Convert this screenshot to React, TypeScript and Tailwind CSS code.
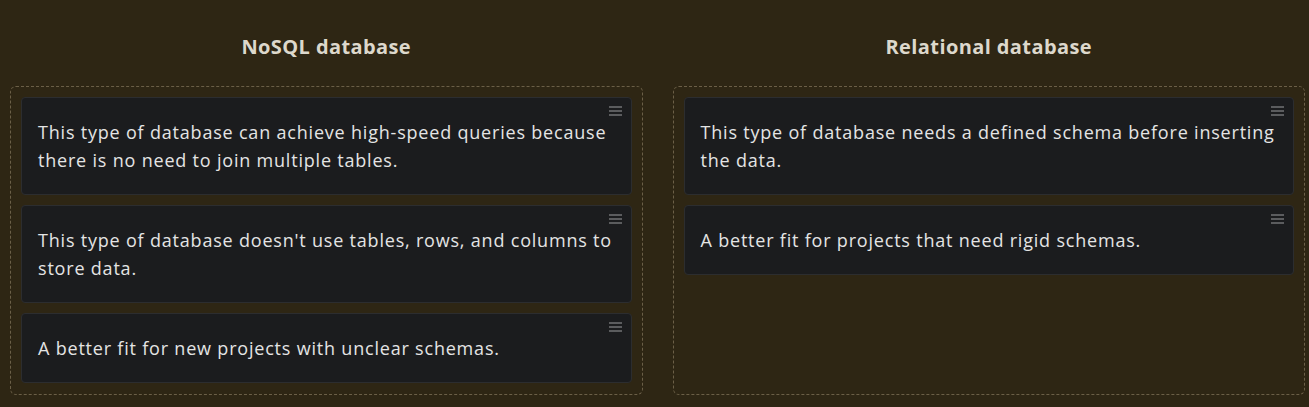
import React from 'react';

const columns = [
  {
    title: 'NoSQL database',
    items: [
      'This type of database can achieve high-speed queries because there is no need to join multiple tables.',
      "This type of database doesn't use tables, rows, and columns to store data.",
      'A better fit for new projects with unclear schemas.',
    ],
  },
  {
    title: 'Relational database',
    items: [
      'This type of database needs a defined schema before inserting the data.',
      'A better fit for projects that need rigid schemas.',
    ],
  },
];

function DragHandle() {
  return (
    <svg width="13" height="11" viewBox="0 0 13 11" className="absolute top-[8px] right-[9px]">
      <rect x="0" y="0" width="13" height="2" fill="#5b5c5e" />
      <rect x="0" y="4" width="13" height="2" fill="#5b5c5e" />
      <rect x="0" y="8" width="13" height="2" fill="#5b5c5e" />
    </svg>
  );
}

export default function App() {
  return (
    <div
      className="min-h-[407px] w-full bg-[#2e2614] pl-[10px] pr-[4px] pt-[31px]"
      style={{ fontFamily: '"Open Sans", sans-serif' }}
    >
      <div className="grid grid-cols-2 gap-[30px]">
        {columns.map((col) => (
          <div key={col.title} className="flex flex-col">
            <h2 className="text-center text-[20px] font-bold leading-[32px] tracking-[0.4px] text-[#ddd8cc]">
              {col.title}
            </h2>
            <div className="mt-[23px] flex h-[309px] flex-col gap-[10px] rounded-[6px] border border-dashed border-[#6b5f47] p-[10px]">
              {col.items.map((item) => (
                <div
                  key={item}
                  className="relative rounded-[4px] border border-[#2c2d2f] bg-[#1b1c1e] py-[20px] pl-[16px] pr-[14px] text-[18px] leading-[28px] tracking-[0.8px] text-[#e4e4e4]"
                >
                  <DragHandle />
                  {item}
                </div>
              ))}
            </div>
          </div>
        ))}
      </div>
    </div>
  );
}
